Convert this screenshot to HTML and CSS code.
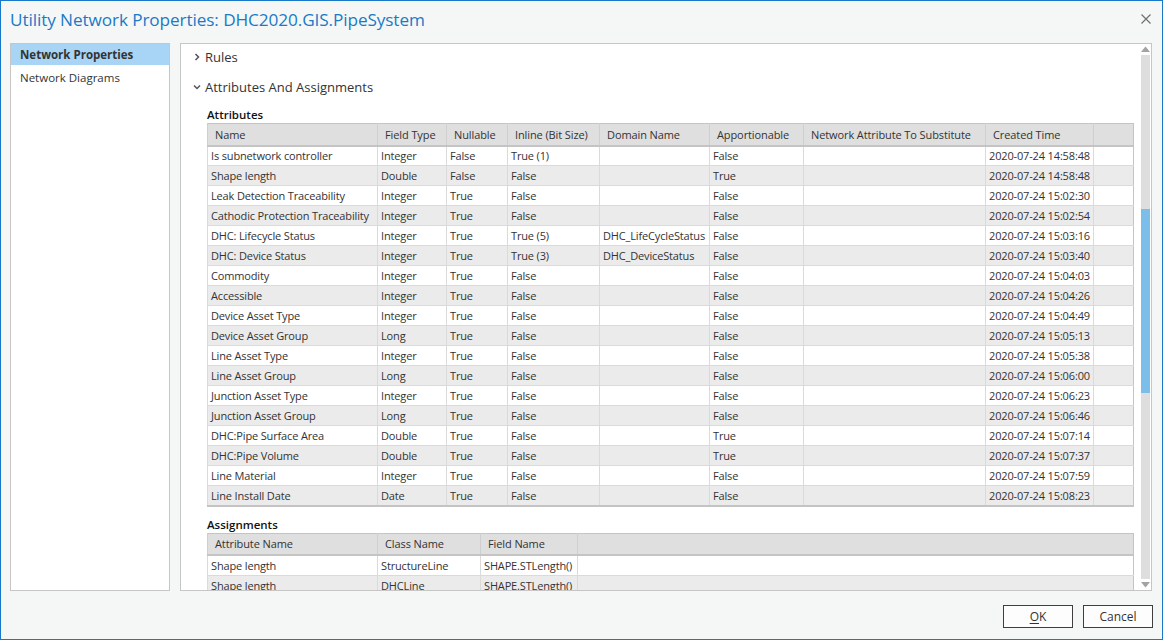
FILE: index.html
```html
<!DOCTYPE html>
<html lang="en">
<head>
<meta charset="utf-8">
<title>Utility Network Properties</title>
<link rel="stylesheet" href="styles.css">
</head>
<body>
<div class="window">
  <header class="titlebar">
    <h1 class="title">Utility Network Properties: DHC2020.GIS.PipeSystem</h1>
    <button class="close" aria-label="Close">
      <svg width="10" height="10" viewBox="0 0 10 10"><path d="M0.5 0.5L9.5 9.5M9.5 0.5L0.5 9.5" stroke="#707070" stroke-width="1.2" fill="none"/></svg>
    </button>
  </header>
  <div class="body">
    <nav class="side">
      <div class="side-item selected">Network Properties</div>
      <div class="side-item">Network Diagrams</div>
    </nav>
    <main class="panel">
      <div class="content">
        <div class="section-head">
          <svg class="chev" width="8" height="8" viewBox="0 0 8 8"><path d="M2.5 1L5.5 4L2.5 7" stroke="#555" stroke-width="1.5" fill="none"/></svg>
          <span>Rules</span>
        </div>
        <div class="section-head">
          <svg class="chev" width="8" height="8" viewBox="0 0 8 8"><path d="M1 2.5L4 5.5L7 2.5" stroke="#555" stroke-width="1.5" fill="none"/></svg>
          <span>Attributes And Assignments</span>
        </div>
        <div class="section-body">
          <div class="label">Attributes</div>
          <table class="grid attrs">
            <colgroup>
              <col class="c-name"><col class="c-type"><col class="c-null"><col class="c-inline"><col class="c-domain"><col class="c-app"><col class="c-net"><col class="c-time"><col>
            </colgroup>
            <thead>
              <tr><th>Name</th><th>Field Type</th><th>Nullable</th><th>Inline (Bit Size)</th><th>Domain Name</th><th>Apportionable</th><th>Network Attribute To Substitute</th><th>Created Time</th><th></th></tr>
            </thead>
            <tbody>
              <tr><td>Is subnetwork controller</td><td>Integer</td><td>False</td><td>True (1)</td><td></td><td>False</td><td></td><td>2020-07-24 14:58:48</td><td></td></tr>
              <tr><td>Shape length</td><td>Double</td><td>False</td><td>False</td><td></td><td>True</td><td></td><td>2020-07-24 14:58:48</td><td></td></tr>
              <tr><td>Leak Detection Traceability</td><td>Integer</td><td>True</td><td>False</td><td></td><td>False</td><td></td><td>2020-07-24 15:02:30</td><td></td></tr>
              <tr><td>Cathodic Protection Traceability</td><td>Integer</td><td>True</td><td>False</td><td></td><td>False</td><td></td><td>2020-07-24 15:02:54</td><td></td></tr>
              <tr><td>DHC: Lifecycle Status</td><td>Integer</td><td>True</td><td>True (5)</td><td>DHC_LifeCycleStatus</td><td>False</td><td></td><td>2020-07-24 15:03:16</td><td></td></tr>
              <tr><td>DHC: Device Status</td><td>Integer</td><td>True</td><td>True (3)</td><td>DHC_DeviceStatus</td><td>False</td><td></td><td>2020-07-24 15:03:40</td><td></td></tr>
              <tr><td>Commodity</td><td>Integer</td><td>True</td><td>False</td><td></td><td>False</td><td></td><td>2020-07-24 15:04:03</td><td></td></tr>
              <tr><td>Accessible</td><td>Integer</td><td>True</td><td>False</td><td></td><td>False</td><td></td><td>2020-07-24 15:04:26</td><td></td></tr>
              <tr><td>Device Asset Type</td><td>Integer</td><td>True</td><td>False</td><td></td><td>False</td><td></td><td>2020-07-24 15:04:49</td><td></td></tr>
              <tr><td>Device Asset Group</td><td>Long</td><td>True</td><td>False</td><td></td><td>False</td><td></td><td>2020-07-24 15:05:13</td><td></td></tr>
              <tr><td>Line Asset Type</td><td>Integer</td><td>True</td><td>False</td><td></td><td>False</td><td></td><td>2020-07-24 15:05:38</td><td></td></tr>
              <tr><td>Line Asset Group</td><td>Long</td><td>True</td><td>False</td><td></td><td>False</td><td></td><td>2020-07-24 15:06:00</td><td></td></tr>
              <tr><td>Junction Asset Type</td><td>Integer</td><td>True</td><td>False</td><td></td><td>False</td><td></td><td>2020-07-24 15:06:23</td><td></td></tr>
              <tr><td>Junction Asset Group</td><td>Long</td><td>True</td><td>False</td><td></td><td>False</td><td></td><td>2020-07-24 15:06:46</td><td></td></tr>
              <tr><td>DHC:Pipe Surface Area</td><td>Double</td><td>True</td><td>False</td><td></td><td>True</td><td></td><td>2020-07-24 15:07:14</td><td></td></tr>
              <tr><td>DHC:Pipe Volume</td><td>Double</td><td>True</td><td>False</td><td></td><td>True</td><td></td><td>2020-07-24 15:07:37</td><td></td></tr>
              <tr><td>Line Material</td><td>Integer</td><td>True</td><td>False</td><td></td><td>False</td><td></td><td>2020-07-24 15:07:59</td><td></td></tr>
              <tr><td>Line Install Date</td><td>Date</td><td>True</td><td>False</td><td></td><td>False</td><td></td><td>2020-07-24 15:08:23</td><td></td></tr>
            </tbody>
          </table>
          <div class="label label-assign">Assignments</div>
          <table class="grid assigns">
            <colgroup>
              <col class="c-name"><col class="c-class"><col class="c-field"><col>
            </colgroup>
            <thead>
              <tr><th>Attribute Name</th><th>Class Name</th><th>Field Name</th><th></th></tr>
            </thead>
            <tbody>
              <tr><td>Shape length</td><td>StructureLine</td><td>SHAPE.STLength()</td><td></td></tr>
              <tr><td>Shape length</td><td>DHCLine</td><td>SHAPE.STLength()</td><td></td></tr>
            </tbody>
          </table>
        </div>
      </div>
      <div class="scrollbar">
        <svg class="arrow" width="9" height="6" viewBox="0 0 9 6"><path d="M0 6L4.5 0.5L9 6Z" fill="#a3a3a3"/></svg>
        <div class="track"><div class="thumb"></div></div>
        <svg class="arrow" width="9" height="6" viewBox="0 0 9 6"><path d="M0 0L4.5 5.5L9 0Z" fill="#a3a3a3"/></svg>
      </div>
    </main>
  </div>
  <footer class="footer">
    <button class="btn"><u>O</u>K</button>
    <button class="btn">Cancel</button>
  </footer>
</div>
</body>
</html>
```

FILE: styles.css
```css
* { box-sizing: border-box; }
html, body { margin: 0; padding: 0; }
body {
  font-family: "Open Sans", "Noto Sans", sans-serif;
  color: #333;
  background: #f5f7f7;
}
.window {
  width: 1163px;
  height: 640px;
  border: 1px solid #1979c9;
  background: #f5f7f7;
  display: flex;
  flex-direction: column;
  overflow: hidden;
}
.titlebar {
  height: 42px;
  display: flex;
  align-items: center;
  justify-content: space-between;
  padding: 0 10px 6px 9px;
  flex: none;
}
.title {
  margin: 0;
  font-size: 17.2px;
  font-weight: 400;
  color: #1a7ac6;
  letter-spacing: -0.1px;
}
.close {
  border: 0;
  background: transparent;
  padding: 0;
  width: 12px;
  height: 12px;
  display: flex;
  align-items: center;
  justify-content: center;
}
.body {
  flex: none;
  height: 548px;
  display: flex;
  gap: 10px;
  padding: 0 10px 0 9px;
}
.side {
  width: 160px;
  flex: none;
  background: #fff;
  border: 1px solid #c6c6c6;
}
.side-item {
  height: 21px;
  line-height: 21px;
  padding-left: 9px;
  font-size: 11.5px;
  color: #333;
  margin-bottom: 2px;
}
.side-item.selected {
  background: #a8d5f5;
  font-weight: 700;
}
.panel {
  flex: 1;
  background: #fff;
  border: 1px solid #c6c6c6;
  display: flex;
  overflow: hidden;
}
.content {
  flex: 1;
  overflow: hidden;
  padding-right: 7px;
}
.section-head {
  height: 26px;
  margin-bottom: 4px;
  display: flex;
  align-items: center;
  padding-left: 12px;
  font-size: 13px;
  color: #333;
}
.chev { margin-right: 4px; flex: none; }
.section-body {
  padding: 3px 0 0 26px;
}
.label {
  height: 16px;
  line-height: 16px;
  font-size: 11.5px;
  font-weight: 600;
  color: #111;
}
.label-assign { margin-top: 10px; }
.grid {
  width: 927px;
  table-layout: fixed;
  border-collapse: collapse;
  border: 1px solid #c4c4c4;
  font-size: 11px;
}
.grid th {
  height: 22px;
  background: #dfdfdf;
  font-weight: 400;
  text-align: left;
  padding: 0 0 0 7px;
  color: #333;
  border-left: 1px solid #cfcfcf;
  border-bottom: 2px solid #c4c4c4;
  white-space: nowrap;
  overflow: hidden;
  letter-spacing: -0.1px;
}
.grid td {
  height: 20px;
  padding: 0 0 0 3px;
  border-left: 1px solid #dadada;
  border-bottom: 1px solid #dadada;
  white-space: nowrap;
  overflow: hidden;
  color: #333;
  letter-spacing: -0.15px;
}
.grid tbody tr:nth-child(even) td { background: #ebebeb; }
.attrs tbody tr:last-child td { border-bottom: 2px solid #c4c4c4; }
.c-name { width: 170px; }
.c-type { width: 69px; }
.c-null { width: 61px; }
.c-inline { width: 92px; }
.c-domain { width: 110px; }
.c-app { width: 94px; }
.c-net { width: 182px; }
.c-time { width: 108px; }
.c-class { width: 103px; }
.c-field { width: 97px; }
.scrollbar {
  width: 10px;
  flex: none;
  display: flex;
  flex-direction: column;
  align-items: center;
  padding: 2px 1px 2px 0;
}
.arrow { flex: none; }
.track {
  flex: 1;
  width: 9px;
  margin: 3px 0 3px;
  background: #dedede;
  padding-top: 154px;
}
.thumb {
  height: 184px;
  background: #7cbeea;
}
.footer {
  flex: 1;
  display: flex;
  justify-content: flex-end;
  align-items: flex-start;
  gap: 10px;
  padding: 14px 9px 0 0;
}
.btn {
  width: 70px;
  height: 23px;
  background: #fdfdfd;
  border: 1px solid #3f3f3f;
  font-family: "Open Sans", "Noto Sans", sans-serif;
  font-size: 12px;
  color: #333;
  padding: 0;
}
.btn u { text-decoration-thickness: 1px; text-underline-offset: 2px; }
```
